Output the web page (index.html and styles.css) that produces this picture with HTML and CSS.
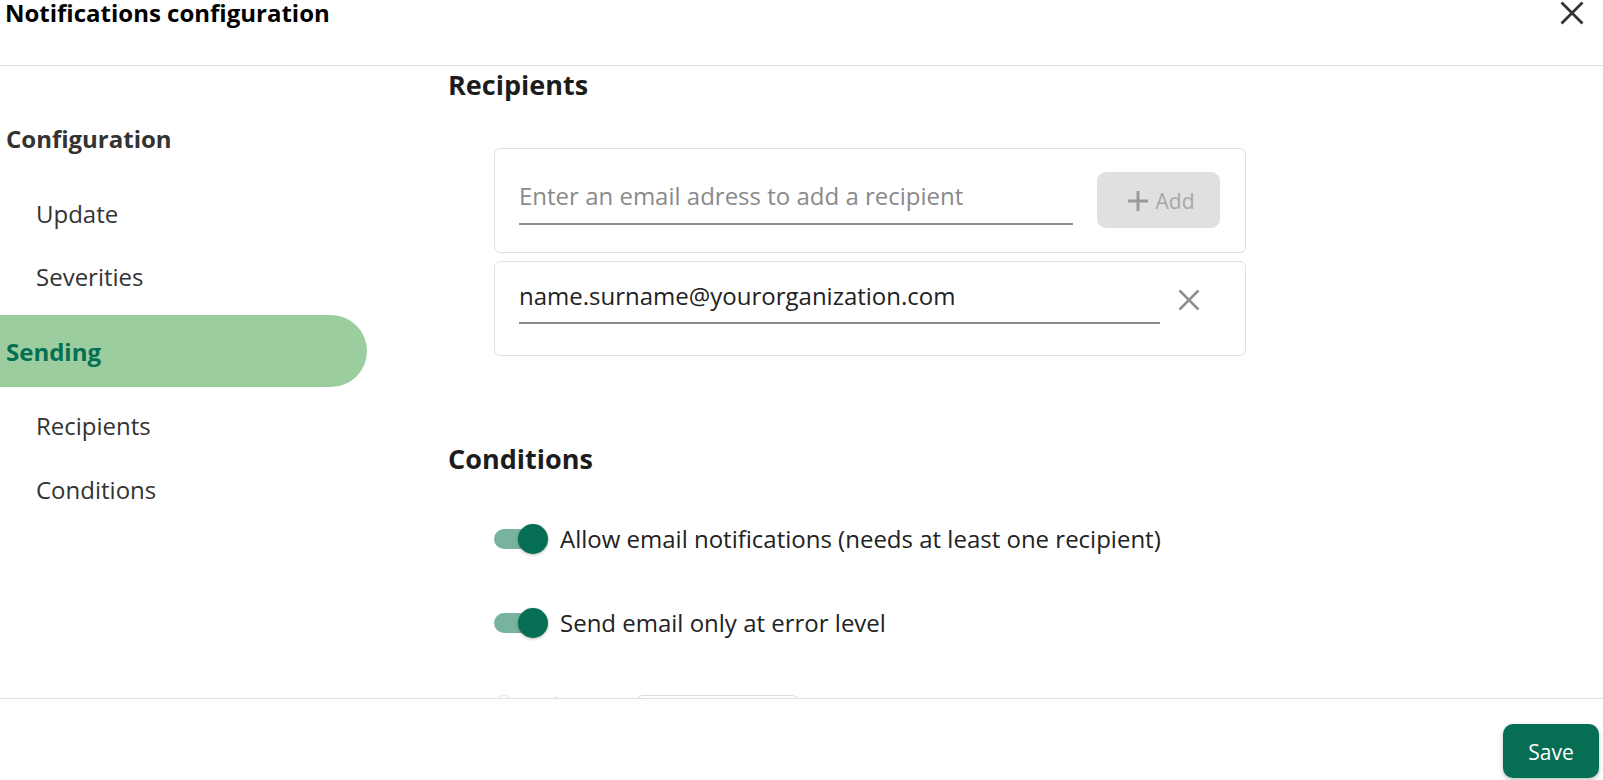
FILE: index.html
```html
<!DOCTYPE html>
<html lang="en">
<head>
<meta charset="utf-8">
<title>Notifications configuration</title>
<link rel="stylesheet" href="styles.css">
</head>
<body>
<div class="dialog">
  <header class="dlg-header">
    <h1 class="dlg-title">Notifications configuration</h1>
    <button class="close-btn" aria-label="Close">
      <svg width="24" height="24" viewBox="0 0 24 24"><path d="M1.5 1.5 L22.5 22.5 M22.5 1.5 L1.5 22.5" stroke="#333" stroke-width="2.8" fill="none"/></svg>
    </button>
  </header>

  <div class="dlg-body">
    <nav class="sidebar">
      <div class="nav-group">Configuration</div>
      <a class="nav-item nav-first">Update</a>
      <a class="nav-item">Severities</a>
      <div class="nav-group nav-active">Sending</div>
      <a class="nav-item nav-after-active">Recipients</a>
      <a class="nav-item nav-last">Conditions</a>
    </nav>

    <main class="content">
      <h2 class="section-title title-recipients">Recipients</h2>

      <div class="card add-card">
        <input class="line-input" type="text" placeholder="Enter an email adress to add a recipient">
        <button class="add-btn">
          <svg width="22" height="22" viewBox="0 0 22 22"><path d="M11 1 V21 M1 11 H21" stroke="#9a9a9a" stroke-width="3" fill="none"/></svg>
          <span>Add</span>
        </button>
      </div>

      <div class="card recipient-card">
        <input class="line-input filled" type="text" value="name.surname@yourorganization.com">
        <button class="remove-btn" aria-label="Remove">
          <svg width="22" height="22" viewBox="0 0 22 22"><path d="M1.5 1.5 L20.5 20.5 M20.5 1.5 L1.5 20.5" stroke="#8f8f8f" stroke-width="2.5" fill="none"/></svg>
        </button>
      </div>

      <h2 class="section-title title-conditions">Conditions</h2>

      <div class="toggle-row row-first">
        <span class="toggle on"><span class="track"></span><span class="knob"></span></span>
        <span class="toggle-label">Allow email notifications (needs at least one recipient)</span>
      </div>

      <div class="toggle-row">
        <span class="toggle on"><span class="track"></span><span class="knob"></span></span>
        <span class="toggle-label">Send email only at error level</span>
      </div>

      <div class="faded-row">
        <span class="faded-chip"></span>
        <span class="faded-text">Sending delay</span>
        <span class="faded-box"></span>
      </div>
    </main>
  </div>

  <footer class="dlg-footer">
    <button class="save-btn">Save</button>
  </footer>
</div>
</body>
</html>
```

FILE: styles.css
```css
* {
  box-sizing: border-box;
}

html, body {
  margin: 0;
  padding: 0;
  background: #ffffff;
}

body {
  font-family: "Open Sans", "Noto Sans", sans-serif;
  color: #333333;
  overflow: hidden;
}

.dialog {
  width: 1603px;
  height: 780px;
  display: flex;
  flex-direction: column;
}

/* Header */
.dlg-header {
  height: 66px;
  flex: none;
  border-bottom: 1px solid #e0e0e0;
  display: flex;
  justify-content: space-between;
  align-items: flex-start;
  padding: 0 19px 0 5px;
}

.dlg-title {
  margin: 1px 0 0 0;
  font-size: 24px;
  line-height: 24px;
  font-weight: 700;
  color: #000000;
}

.close-btn {
  margin-top: 1px;
  width: 24px;
  height: 24px;
  padding: 0;
  border: 0;
  background: transparent;
  display: block;
}

.close-btn svg {
  display: block;
}

/* Body */
.dlg-body {
  flex: none;
  height: 632px;
  display: flex;
  overflow: hidden;
}

.sidebar {
  width: 440px;
  flex: none;
  display: flex;
  flex-direction: column;
  padding-top: 49px;
}

.nav-group {
  font-size: 24px;
  font-weight: 700;
  line-height: 48px;
  padding-left: 6px;
  color: #333333;
}

.nav-item {
  display: block;
  font-size: 24px;
  line-height: 63px;
  height: 63px;
  padding-left: 36px;
  color: #333333;
}

.nav-first {
  margin-top: 19px;
}

.nav-last {
  margin-top: 1px;
}

.nav-active {
  margin-top: 7px;
  width: 367px;
  height: 72px;
  padding-top: 2px;
  line-height: 70px;
  background: #9bcd9f;
  color: #066f53;
  border-radius: 0 36px 36px 0;
}

.nav-after-active {
  margin-top: 7px;
}

/* Content */
.content {
  flex: 1;
  padding-left: 8px;
  overflow: hidden;
}

.section-title {
  margin: 0;
  font-size: 27px;
  line-height: 32px;
  font-weight: 700;
  color: #1c1c1c;
}

.title-recipients {
  margin-top: 3px;
}

.title-conditions {
  margin-top: 87px;
}

.card {
  margin-left: 46px;
  width: 752px;
  border: 1px solid #e0e0e0;
  border-radius: 6px;
  display: flex;
}

.add-card {
  margin-top: 47px;
  height: 105px;
  align-items: center;
  padding: 0 25px 2px 24px;
}

.recipient-card {
  margin-top: 8px;
  height: 95px;
  align-items: center;
  padding: 0 44px 17px 24px;
}

.line-input {
  display: block;
  height: 48px;
  padding: 0 0 8px 0;
  border: 0;
  border-bottom: 2px solid #8c8c8c;
  outline: none;
  background: transparent;
  font-family: "Open Sans", "Noto Sans", sans-serif;
  font-size: 24px;
  color: #222222;
}

.add-card .line-input {
  width: 554px;
  margin-right: 24px;
  margin-top: 2px;
}

.recipient-card .line-input {
  width: 641px;
  margin-right: 18px;
}

.line-input::placeholder {
  color: #8a8a8a;
  opacity: 1;
}

.add-btn {
  width: 123px;
  height: 56px;
  border: 0;
  border-radius: 9px;
  background: #e0e0e0;
  display: flex;
  align-items: center;
  justify-content: center;
  gap: 7px;
  padding: 0 0 0 4px;
  font-family: "Open Sans", "Noto Sans", sans-serif;
  font-size: 21px;
  color: #a8a8a8;
}

.add-btn svg {
  display: block;
  margin-top: 2px;
}

.add-btn span {
  margin-top: 2px;
}

.remove-btn {
  width: 22px;
  height: 22px;
  padding: 0;
  border: 0;
  background: transparent;
}

.remove-btn svg {
  display: block;
}

/* Toggles */
.toggle-row {
  margin-left: 46px;
  margin-top: 36px;
  height: 48px;
  display: flex;
  align-items: center;
}

.row-first {
  margin-top: 40px;
}

.toggle {
  position: relative;
  width: 54px;
  height: 30px;
  flex: none;
}

.toggle .track {
  position: absolute;
  left: 0;
  top: 5px;
  width: 46px;
  height: 20px;
  border-radius: 10px;
  background: #78b2a1;
}

.toggle .knob {
  position: absolute;
  left: 24px;
  top: 0;
  width: 30px;
  height: 30px;
  border-radius: 50%;
  background: #066f53;
  box-shadow: 0 1px 3px rgba(0, 0, 0, 0.3);
}

.toggle-label {
  margin-left: 12px;
  font-size: 24px;
  line-height: 32px;
  color: #222222;
}

/* Faded, scrolled-out row */
.faded-row {
  margin-left: 46px;
  margin-top: 48px;
  display: flex;
  align-items: flex-start;
}

.faded-chip {
  width: 20px;
  height: 30px;
  border: 1px solid #e6e6e6;
  border-radius: 10px;
  flex: none;
}

.faded-text {
  margin-left: -2px;
  margin-top: -4px;
  width: 123px;
  font-size: 20px;
  line-height: 28px;
  color: #c4c4c4;
}

.faded-box {
  margin-left: 0;
  width: 165px;
  height: 44px;
  border: 1px solid #dddddd;
  border-radius: 8px;
}

/* Footer */
.dlg-footer {
  flex: none;
  height: 82px;
  border-top: 1px solid #e0e0e0;
  display: flex;
  justify-content: flex-end;
  align-items: flex-start;
  padding: 25px 4px 0 0;
}

.save-btn {
  width: 96px;
  height: 54px;
  border: 0;
  border-radius: 10px;
  background: #066f53;
  color: #ffffff;
  padding: 1px 0 0 0;
  font-family: "Open Sans", "Noto Sans", sans-serif;
  font-size: 21px;
  box-shadow: 0 2px 4px rgba(0, 0, 0, 0.25);
}
```
